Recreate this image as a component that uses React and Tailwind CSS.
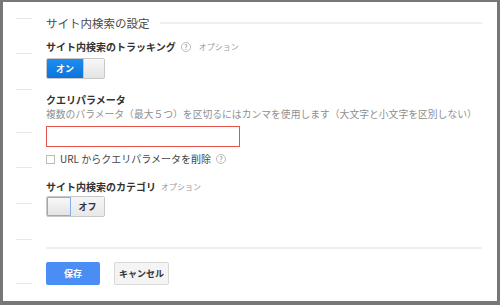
import { useState } from "react";

const font = { fontFamily: '"Noto Sans CJK JP", "Noto Sans", sans-serif' };

function Help() {
  return (
    <span className="inline-flex h-[10px] w-[10px] items-center justify-center rounded-full border border-[#bbb] text-[7px] font-bold leading-none text-[#aaa]">
      ?
    </span>
  );
}

function Toggle({ on }) {
  if (on) {
    return (
      <div className="flex h-[21px] w-[59px] overflow-hidden rounded-[2px] border border-[#c8c8c8]">
        <div className="flex w-[36px] items-center justify-center bg-gradient-to-b from-[#1d8cf0] to-[#0a74dc] text-[9px] font-bold text-white">
          オン
        </div>
        <div className="flex-1 bg-gradient-to-b from-[#f8f8f8] to-[#e4e4e4] border-l border-[#c8c8c8]" />
      </div>
    );
  }
  return (
    <div className="flex h-[21px] w-[59px] overflow-hidden rounded-[2px] border border-[#c8c8c8]">
      <div className="w-[24px] border border-[#7fb0ee] bg-gradient-to-b from-[#f8f8f8] to-[#e4e4e4]" />
      <div className="flex flex-1 items-center justify-center bg-gradient-to-b from-[#f6f6f6] to-[#e8e8e8] text-[9px] font-bold text-[#333]">
        オフ
      </div>
    </div>
  );
}

export default function App() {
  const [query, setQuery] = useState("");
  const dashes = [18, 53, 89, 132, 167, 203, 239, 283];

  return (
    <div
      style={font}
      className="h-[305px] w-[500px] border-t-2 border-l-[3px] border-r-[3px] border-b-4 border-[#777] bg-white"
    >
      <div className="relative flex h-full">
        {/* left gutter marks */}
        {dashes.map((y) => (
          <div
            key={y}
            className="absolute left-[13px] h-px w-[16px] bg-[#e8e8e8]"
            style={{ top: y - 2 }}
          />
        ))}

        <div className="ml-[43px] mr-[15px] flex flex-1 flex-col">
          <div className="mt-[13px] flex items-center gap-[10px]">
            <span className="text-[11.5px] leading-[16px] text-[#4a4a4a]">サイト内検索の設定</span>
            <div className="h-[2px] flex-1 bg-[#efefef]" />
          </div>

          <div className="mt-[9px] flex items-center gap-[5px]">
            <span className="text-[10px] font-bold leading-[14px] text-[#333]">サイト内検索のトラッキング</span>
            <Help />
            <span className="ml-[3px] text-[8px] text-[#999]">オプション</span>
          </div>
          <div className="mt-[4px]">
            <Toggle on />
          </div>

          <div className="mt-[14px] text-[10px] font-bold leading-[14px] text-[#333]">クエリパラメータ</div>
          <div className="mt-[1px] text-[9.8px] leading-[13px] text-[#8f8f8f]">
            複数のパラメータ（最大５つ）を区切るにはカンマを使用します（大文字と小文字を区別しない）
          </div>
          <input
            value={query}
            onChange={(e) => setQuery(e.target.value)}
            className="mt-[5px] h-[21px] w-[194px] border border-[#e5534b] px-1 text-[10px] outline-none"
          />
          <label className="mt-[5px] flex items-center gap-[5px]">
            <span className="h-[9px] w-[9px] border border-[#bbb] bg-white" />
            <span className="text-[10px] leading-[14px] text-[#444]">URL からクエリパラメータを削除</span>
            <Help />
          </label>

          <div className="mt-[14px] flex items-center gap-[5px]">
            <span className="text-[10px] font-bold leading-[14px] text-[#333]">サイト内検索のカテゴリ</span>
            <span className="text-[8px] text-[#999]">オプション</span>
          </div>
          <div className="mt-[2px]">
            <Toggle on={false} />
          </div>

          <div className="mt-[30px] h-[2px] bg-[#efefef]" />

          <div className="mt-[13px] flex gap-[14px]">
            <button className="flex h-[23px] w-[54px] items-center justify-center rounded-[2px] bg-[#4a8ef5] text-[9px] font-bold text-white">
              保存
            </button>
            <button className="flex h-[23px] w-[55px] items-center justify-center rounded-[2px] border border-[#d8d8d8] bg-[#f4f4f4] text-[9px] font-bold text-[#333]">
              キャンセル
            </button>
          </div>
        </div>
      </div>
    </div>
  );
}
